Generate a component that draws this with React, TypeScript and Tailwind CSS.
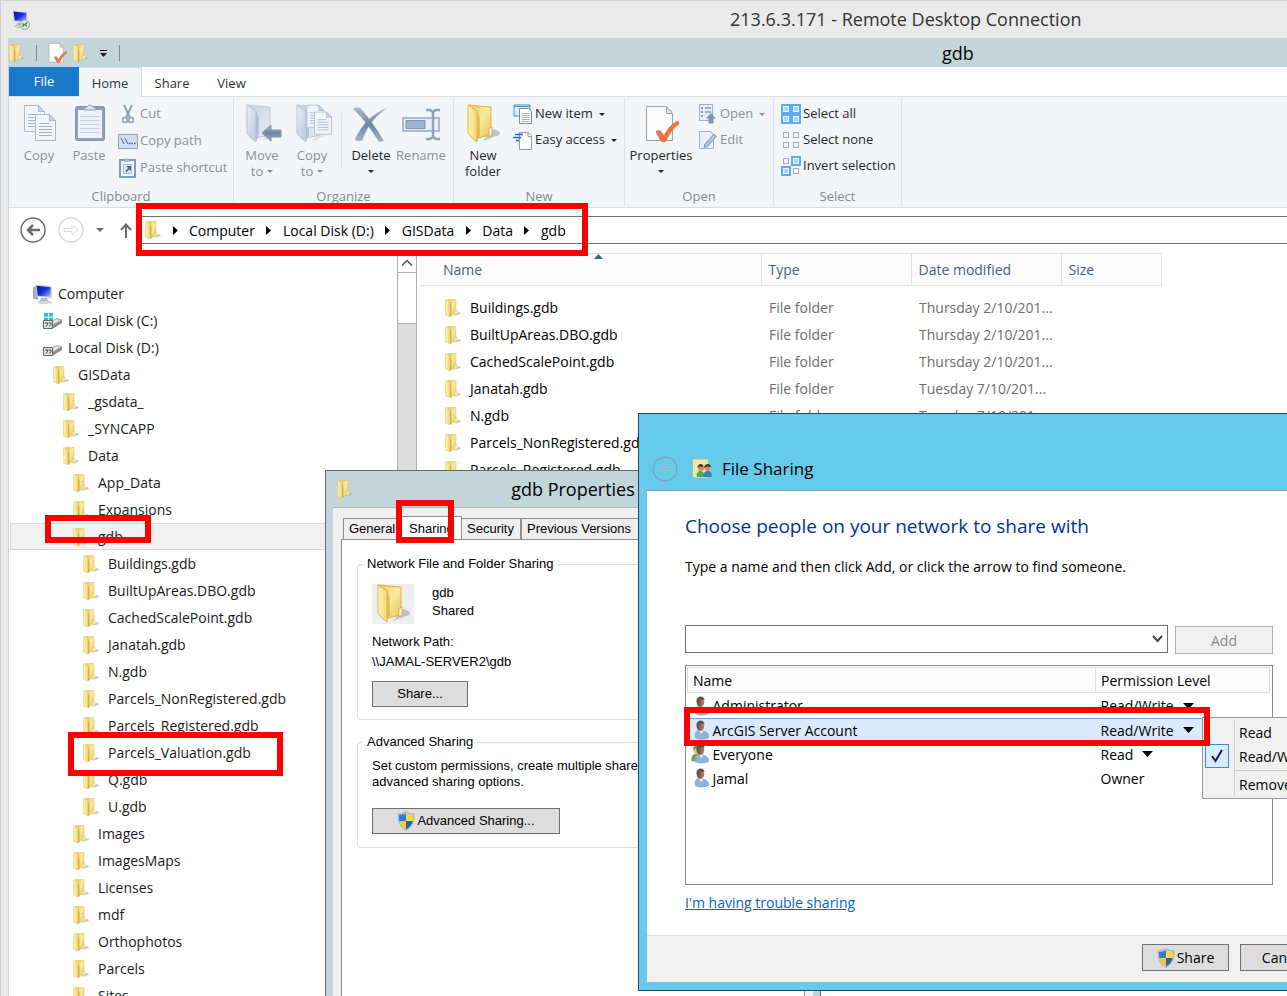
import { useState } from 'react';
import type { ReactNode } from 'react';

type TreeNode = { label: string; depth: number; kind?: 'computer' | 'system' | 'disk' };

const treeNodes: TreeNode[] = [
 { label: 'Computer', depth: 0, kind: 'computer' },
 { label: 'Local Disk (C:)', depth: 1, kind: 'system' },
 { label: 'Local Disk (D:)', depth: 1, kind: 'disk' },
 { label: 'GISData', depth: 2 },
 { label: '_gsdata_', depth: 3 },
 { label: '_SYNCAPP', depth: 3 },
 { label: 'Data', depth: 3 },
 { label: 'App_Data', depth: 4 },
 { label: 'Expansions', depth: 4 },
 { label: 'gdb', depth: 4 },
 { label: 'Buildings.gdb', depth: 5 },
 { label: 'BuiltUpAreas.DBO.gdb', depth: 5 },
 { label: 'CachedScalePoint.gdb', depth: 5 },
 { label: 'Janatah.gdb', depth: 5 },
 { label: 'N.gdb', depth: 5 },
 { label: 'Parcels_NonRegistered.gdb', depth: 5 },
 { label: 'Parcels_Registered.gdb', depth: 5 },
 { label: 'Parcels_Valuation.gdb', depth: 5 },
 { label: 'Q.gdb', depth: 5 },
 { label: 'U.gdb', depth: 5 },
 { label: 'Images', depth: 4 },
 { label: 'ImagesMaps', depth: 4 },
 { label: 'Licenses', depth: 4 },
 { label: 'mdf', depth: 4 },
 { label: 'Orthophotos', depth: 4 },
 { label: 'Parcels', depth: 4 },
 { label: 'Sites', depth: 4 },
];

const indents = ['pl-[22px]', 'pl-[32px]', 'pl-[42px]', 'pl-[52px]', 'pl-[62px]', 'pl-[72px]'];

const files = [
 { name: 'Buildings.gdb', date: 'Thursday 2/10/201...' },
 { name: 'BuiltUpAreas.DBO.gdb', date: 'Thursday 2/10/201...' },
 { name: 'CachedScalePoint.gdb', date: 'Thursday 2/10/201...' },
 { name: 'Janatah.gdb', date: 'Tuesday 7/10/201...' },
 { name: 'N.gdb', date: 'Tuesday 7/10/201...' },
 { name: 'Parcels_NonRegistered.gdb', date: 'Tuesday 7/10/201...' },
 { name: 'Parcels_Registered.gdb', date: 'Tuesday 7/10/201...' },
];

const people = [
 { name: 'Administrator', level: 'Read/Write', menu: true },
 { name: 'ArcGIS Server Account', level: 'Read/Write', menu: true },
 { name: 'Everyone', level: 'Read', menu: true, group: true },
 { name: 'Jamal', level: 'Owner' },
];

const crumbs = ['Computer', 'Local Disk (D:)', 'GISData', 'Data', 'gdb'];

/* ---------- icons ---------- */

// Gradients shared by all the icons on the page
function IconDefs() {
 return (
  <svg className="absolute h-0 w-0" aria-hidden="true">
   <defs>
    <linearGradient id="folderFront" x1="0" y1="0" x2="1" y2="0">
     <stop offset="0" stopColor="#fdf3b8" />
     <stop offset="1" stopColor="#f3d873" />
    </linearGradient>
    <linearGradient id="folderBack" x1="0" y1="0" x2="1" y2="1">
     <stop offset="0" stopColor="#e6c55e" />
     <stop offset="0.5" stopColor="#f9eaa0" />
     <stop offset="1" stopColor="#e8c453" />
    </linearGradient>
    <linearGradient id="blueFront" x1="0" y1="0" x2="1" y2="1">
     <stop offset="0" stopColor="#e9eff7" />
     <stop offset="1" stopColor="#b9c7da" />
    </linearGradient>
    <linearGradient id="blueBack" x1="0" y1="0" x2="1" y2="1">
     <stop offset="0" stopColor="#c6d2e2" />
     <stop offset="1" stopColor="#e4ebf4" />
    </linearGradient>
    <linearGradient id="steel" x1="0" y1="0" x2="0" y2="1">
     <stop offset="0" stopColor="#aebdce" />
     <stop offset="0.5" stopColor="#71859f" />
     <stop offset="1" stopColor="#a3b2c6" />
    </linearGradient>
    <linearGradient id="screen" x1="0" y1="0" x2="1" y2="1">
     <stop offset="0" stopColor="#0b12a8" />
     <stop offset="0.5" stopColor="#1c2fd8" />
     <stop offset="1" stopColor="#9fc0ff" />
    </linearGradient>
    <linearGradient id="face" x1="0" y1="0" x2="1" y2="0">
     <stop offset="0" stopColor="#5c4638" />
     <stop offset="1" stopColor="#b98563" />
    </linearGradient>
   </defs>
  </svg>
 );
}

function SmallFolder() {
 return (
  <svg className="h-5 w-4 shrink-0" viewBox="0 0 16 20" aria-hidden="true">
   <path d="M9 18l6.500-2c.8-1-.8-2.500-2-2z" fill="#b5b5b5" opacity=".75" />
   <path d="M2.500 1.500H11v14L5 18z" fill="url(#folderBack)" stroke="#e0bf5c" strokeWidth=".5" />
   <path d="M.5 1.500L5 3.500V19l-4.500-2z" fill="url(#folderFront)" stroke="#e3c566" strokeWidth=".5" />
   <path d="M5 3.500V19l1.500-.8V8z" fill="#b9933a" opacity=".6" />
   <path d="M9.500 12.500h2.500v3.500l-2.500.6z" fill="#f8eab0" stroke="#d9bd68" strokeWidth=".4" />
  </svg>
 );
}

function BigFolder({ blue = false, children }: { blue?: boolean; children?: ReactNode }) {
 return (
  <svg className="h-10 w-10" viewBox="0 0 40 40" aria-hidden="true">
   <path d="M20 37l16-6c3-2-1-5-6-6z" fill="#9d9d9d" opacity={blue ? 0.2 : 0.55} />
   <path d="M5 1l23 2v28l-14 3z" fill={blue ? 'url(#blueBack)' : 'url(#folderBack)'} stroke={blue ? '#bccadb' : '#dcb23c'} />
   <path d="M5 1l9 6v31l-5-4-4-5z" fill={blue ? 'url(#blueFront)' : 'url(#folderFront)'} stroke={blue ? '#b3c2d6' : '#ddb64a'} />
   <path d="M14 8v29l3-6V14z" fill={blue ? '#9fb0c6' : '#d9aa30'} opacity=".6" />
   {!blue && <path d="M26 24l3-1v8l-3 2z" fill="#fbf4cf" stroke="#c9a13c" strokeWidth=".7" />}
   {children}
  </svg>
 );
}

// Sheet with a folded corner and text lines, drawn inside a parent svg
function Sheet({ x, y }: { x: number; y: number }) {
 return (
  <g transform={`translate(${x} ${y})`}>
   <path d="M.5.5h14l6 6v20H.5z" fill="#f2f6fb" stroke="#a9bad0" />
   <path d="M14.500.5v6h6z" fill="#c8d5e5" stroke="#a9bad0" />
   <path d="M4 9.500h10M4 12.500h13M4 15.500h13M4 18.500h13M4 21.500h13" stroke="#9fb2cc" />
  </g>
 );
}

function CopyIcon() {
 return (
  <svg className="h-10 w-10" viewBox="0 0 40 40" aria-hidden="true">
   <Sheet x={5} y={1} />
   <Sheet x={16} y={10} />
  </svg>
 );
}

function PasteIcon() {
 return (
  <svg className="h-10 w-10" viewBox="0 0 40 40" aria-hidden="true">
   <rect x="6.500" y="2.500" width="29" height="34" rx="2" fill="#8ea1bf" stroke="#7f93b3" />
   <path d="M9 6h24v28H9z" fill="#eef3fa" />
   <path d="M11 12.500h20M11 16.500h20M11 20.500h20M11 24.500h20M11 28.500h20" stroke="#c3d0e2" />
   <path d="M15 6c0-3 3-2.500 4-4 1-1.500 3-1.500 4 0s4 1 4 4z" fill="#dbe4f0" stroke="#8a9dbb" />
  </svg>
 );
}

function PropertiesIcon({ className }: { className: string }) {
 return (
  <svg className={className} viewBox="0 0 40 40" aria-hidden="true">
   <path d="M5.500 2.500h20l6 7v27h-26z" fill="#fdfdfd" stroke="#a3a3a3" />
   <path d="M25.500 2.500v7h6z" fill="#e5e5e5" stroke="#a3a3a3" />
   <path d="M15 28c2-2 4-2 5 0l3 4c3-7 8-12 14-15l1 3c-6 4-10 10-13 17-1 1-4 1-5 0z" fill="#ef7440" stroke="#d4592a" strokeWidth=".6" />
  </svg>
 );
}

function MonitorIcon({ remote = false }: { remote?: boolean }) {
 return (
  <svg className="h-5 w-5 shrink-0" viewBox={remote ? '2 1 18 19' : '1 1 17 17'} aria-hidden="true">
   {!remote && <path d="M1 4l4-1v11l-4-1z" fill="#9daec4" stroke="#7d8da3" strokeWidth=".5" />}
   <path d="M3 1.500l14 1.500v10L4 12z" fill="#c9d3e4" />
   <path d="M4 2.500l12 1.300v8L5 11z" fill="url(#screen)" />
   <path d="M8 13h5l1 3H6z" fill="#b7bcc6" />
   <path d="M5 16l8-1 4 2-10 1z" fill="#d8dbe1" stroke="#a4a9b3" strokeWidth=".4" />
   {remote && (
    <>
     <circle cx="14.500" cy="15" r="4.500" fill="#e3e6e3" stroke="#8f958f" strokeWidth=".8" />
     <path d="M12 14l2 1-1.500 2M17 13l-2 1.500 1.500 2" fill="none" stroke="#2e9a3c" strokeWidth="1.300" />
    </>
   )}
  </svg>
 );
}

function DiskIcon({ system = false }: { system?: boolean }) {
 return (
  <svg className="h-5 w-5 shrink-0" viewBox="1 0 20 20" aria-hidden="true">
   {system && <path d="M2 2h4v3.500H2zM7 2h4v3.500H7zM2 6.500h4V9H2zM7 6.500h4V9H7z" fill="#1fbfe8" />}
   <path d="M7 11l8-3.500 5 1.500-9 5z" fill="#e0e0e0" stroke="#8a8a8a" strokeWidth=".7" />
   <path d="M11 14l9-5v3l-9 5.500z" fill="#8c8c8c" />
   <path d="M1.500 9.500h9v8h-9z" fill="#d6e4e4" stroke="#5d6b6b" />
   <path d="M3 12h2.500v1.500L4 15.500M6.500 12H9v1.500l-1.500 2" fill="none" stroke="#444" />
  </svg>
 );
}

function Person({ group = false }: { group?: boolean }) {
 return (
  <svg className="h-5 w-5 shrink-0" viewBox="0 0 20 20" aria-hidden="true">
   {group && (
    <>
     <path d="M1 17c-1-4 1-7 4-7s5 2 5 7z" fill="#76a84f" stroke="#54863a" strokeWidth=".5" />
     <circle cx="5.500" cy="6" r="3.500" fill="#dfc07c" />
     <path d="M2 6c0-6 7-6 7 0-2-2-5-2-7 0z" fill="#9b7a35" />
    </>
   )}
   <path d="M4.500 18C3.500 13 5 10.500 8 10.500c5 0 10.500 2 9.500 7-3.500 2-9.500 2-13 .5z" fill="#8db4df" stroke="#6e95c2" strokeWidth=".5" />
   <path d="M8 10.500l2.500 3.500 1.500-3.500z" fill="#fff" />
   <ellipse cx="9.500" cy="6" rx="3.800" ry="5" fill="url(#face)" />
   <path d="M5.500 6c-.5-7 8-7 8-2-2-1.500-5-1.200-8 2z" fill="#565250" />
  </svg>
 );
}

function Shield() {
 return (
  <svg className="h-5 w-[18px] shrink-0" viewBox="0 0 18 20" aria-hidden="true">
   <path d="M9 .5c2 1.600 5 2.500 8 2.500 0 8-2 13-8 16.500C3 16 1 11 1 3c3 0 6-.9 8-2.500z" fill="#c3c9d0" stroke="#8f9aa6" strokeWidth=".6" />
   <path d="M9 2.200V10H2.300C2 8 2 6 2 4c2.600-.1 5-.8 7-1.800z" fill="#2c7fc8" />
   <path d="M9 2.200V10h6.700c.3-2 .3-4 .3-6-2.600-.1-5-.8-7-1.800z" fill="#fbd64c" />
   <path d="M9 10H2.300C3 13.500 5 16.500 9 18.500z" fill="#f5c935" />
   <path d="M9 10h6.700c-.7 3.500-2.700 6.500-6.700 8.500z" fill="#2469ae" />
  </svg>
 );
}

function CaretDown({ className = 'h-1 w-[7px]' }: { className?: string }) {
 return (
  <svg className={className} viewBox="0 0 8 4" preserveAspectRatio="none" fill="currentColor" aria-hidden="true">
   <path d="M0 0h8L4 4z" />
  </svg>
 );
}

function CaretRight() {
 return (
  <span className="flex w-7 shrink-0 justify-center">
   <svg className="h-[9px] w-[5px]" viewBox="0 0 5 9" aria-hidden="true">
    <path d="M0 0l5 4.500L0 9z" />
   </svg>
  </span>
 );
}

function SmallIcon({ children }: { children: ReactNode }) {
 return (
  <svg className="h-5 w-5 shrink-0" viewBox="0 0 20 20" fill="none" aria-hidden="true">
   {children}
  </svg>
 );
}

function SelectBoxes({ on }: { on: boolean[] }) {
 const spots = [[0, 0], [10, 0], [0, 10], [10, 10]];
 return (
  <SmallIcon>
   {spots.map(([x, y], i) => (
    <g key={i}>
     {on[i] && <rect x={x} y={y} width="10" height="10" fill="#5fabee" />}
     <rect x={x + 2.5} y={y + 2.5} width="5" height="5" fill={on[i] ? '#a5d8fa' : '#f6f6f6'} stroke={on[i] ? '#e4f4ff' : '#a9a9a9'} />
    </g>
   ))}
  </SmallIcon>
 );
}

/* ---------- ribbon ---------- */

function BigButton({ icon, label, second, caret, disabled, wide }: { icon: ReactNode; label: string; second?: string; caret?: boolean; disabled?: boolean; wide?: boolean }) {
 return (
  <button disabled={disabled} className={`flex shrink-0 flex-col items-center pt-[3px] leading-4 ${wide ? 'w-[66px]' : 'w-[50px]'} ${disabled ? 'text-[#8c8f93]' : 'text-[#262626]'}`}>
   <span className="mb-[3px] h-10">{icon}</span>
   <span>{label}</span>
   <span className="flex h-4 items-center gap-1">
    {second}
    {caret && <CaretDown className="h-[3px] w-[6px]" />}
   </span>
  </button>
 );
}

function SmallButton({ icon, label, caret, disabled }: { icon: ReactNode; label: string; caret?: boolean; disabled?: boolean }) {
 return (
  <button disabled={disabled} className={`flex h-[26px] items-center gap-[2px] whitespace-nowrap ${disabled ? 'text-[#8c8f93]' : 'text-[#262626]'}`}>
   {icon}
   {label}
   {caret && <CaretDown className="ml-1 h-[3px] w-[6px]" />}
  </button>
 );
}

function RibbonGroup({ label, className, children }: { label: string; className: string; children: ReactNode }) {
 return (
  <section className={`my-px shrink-0 border-r border-[#dde2e6] pt-[3px] ${className}`}>
   <div className="flex h-[87px]">{children}</div>
   <h2 className="text-center leading-4 text-[#85898e]">{label}</h2>
  </section>
 );
}

function Ribbon() {
 return (
  <div className="flex h-28 overflow-hidden border-y border-[#d8dce0] bg-[#f3f6f8] text-[13px]">
   <RibbonGroup label="Clipboard" className="w-[225px] px-[5px]">
    <BigButton icon={<CopyIcon />} label="Copy" disabled />
    <BigButton icon={<PasteIcon />} label="Paste" disabled />
    <div className="flex flex-col gap-px pl-1">
     <SmallButton
      disabled
      label="Cut"
      icon={
       <SmallIcon>
        <path d="M6 1l6 13M14 1L8 14" stroke="#8ea1bd" strokeWidth="2" />
        <circle cx="7" cy="16" r="2.500" stroke="#8ea1bd" strokeWidth="1.500" />
        <circle cx="13" cy="16" r="2.500" stroke="#8ea1bd" strokeWidth="1.500" />
       </SmallIcon>
      }
     />
     <SmallButton
      disabled
      label="Copy path"
      icon={
       <SmallIcon>
        <rect x=".5" y="3.500" width="19" height="14" fill="#d3dfef" stroke="#8ea1bd" />
        <path d="M3 7l3 6M7 7l3 6" stroke="#4e6384" />
        <path d="M11 12.500h1.500m1 0H15m1 0h1.500" stroke="#4e6384" strokeWidth="1.500" />
       </SmallIcon>
      }
     />
     <SmallButton
      disabled
      label="Paste shortcut"
      icon={
       <SmallIcon>
        <rect x="2" y="2" width="15" height="17" fill="#f4f8fc" stroke="#849abd" strokeWidth="2" />
        <path d="M6 3c0-2 2-1 3.500-2C11 2 13 1 13 3z" fill="#dbe4f0" stroke="#849abd" />
        <rect x="5.500" y="6.500" width="8" height="9" fill="#e1eaf5" stroke="#a9bad0" />
        <path d="M8 8h5v5l-1.500-1.500L8 14.500 7.500 13l2.500-3z" fill="#4e6d9c" />
       </SmallIcon>
      }
     />
    </div>
   </RibbonGroup>

   <RibbonGroup label="Organize" className="w-[220px] px-[3px]">
    <BigButton
     disabled
     label="Move"
     second="to"
     caret
     icon={<BigFolder blue><path d="M20 29l9-8v5h10v7H29v4z" fill="url(#steel)" stroke="#8396ad" /></BigFolder>}
    />
    <BigButton
     disabled
     label="Copy"
     second="to"
     caret
     icon={<BigFolder blue><g transform="scale(.85)"><Sheet x={17} y={1} /><Sheet x={26} y={9} /></g></BigFolder>}
    />
    <span className="mx-1 mt-3 h-14 w-px bg-[#dde2e6]" />
    <BigButton
     label="Delete"
     caret
     icon={
      <svg className="h-10 w-10" viewBox="0 0 40 40" aria-hidden="true">
       <path d="M2 5c3-3 7-2 9 1 6 7 14 17 22 31l-5 1C21 27 13 15 2 5z" fill="url(#steel)" />
       <path d="M38 3C26 10 16 22 12 35c-1 3-7 3-8 0C10 22 21 9 38 3z" fill="url(#steel)" />
      </svg>
     }
    />
    <BigButton
     disabled
     label="Rename"
     icon={
      <svg className="h-10 w-10" viewBox="0 0 40 40" fill="none" aria-hidden="true">
       <path d="M2 14h36v13H2z" fill="#e8eff8" stroke="#93a7c3" strokeWidth="1.500" />
       <path d="M5 16.500h19v8H5z" fill="#9fb2cc" stroke="#7e93b2" />
       <path d="M25 6h4l3 2 3-2h4M25 35h4l3-2 3 2h4M32 7v27" stroke="#8fa2be" strokeWidth="2.500" />
      </svg>
     }
    />
   </RibbonGroup>

   <RibbonGroup label="New" className="w-[171px] px-1">
    <BigButton icon={<BigFolder />} label="New" second="folder" />
    <div className="flex flex-col pl-[5px]">
     <SmallButton
      label="New item"
      caret
      icon={
       <SmallIcon>
        <path d="M1 1h16v11H1z" fill="#d9eefa" stroke="#3d97cc" />
        <path d="M1 2.500h16" stroke="#3d97cc" />
        <path d="M6.500 4.500h9l3 3v12h-12z" fill="#fff" stroke="#888" />
        <path d="M8.500 9.500h8m-8 2h8m-8 2h8m-8 2h8m-8 2h8" stroke="#a3b4c4" />
       </SmallIcon>
      }
     />
     <SmallButton
      label="Easy access"
      caret
      icon={
       <SmallIcon>
        <path d="M6.500 2.500h9l3 3v14h-12z" fill="#fdfdfd" stroke="#999" />
        <path d="M15 2.500v4h4" stroke="#999" />
        <path d="M2 4.500h8M0 7.500h8M3 10.500h3" stroke="#2563c9" strokeWidth="1.500" />
       </SmallIcon>
      }
     />
    </div>
   </RibbonGroup>

   <RibbonGroup label="Open" className="w-[149px] px-[3px]">
    <BigButton wide icon={<PropertiesIcon className="h-10 w-10" />} label="Properties" caret />
    <div className="flex flex-col pl-1">
     <SmallButton
      disabled
      label="Open"
      caret
      icon={
       <SmallIcon>
        <path d="M1.500.5h13v16h-13z" fill="#e8eff8" stroke="#9bb0cc" />
        <path d="M3 3h2v2H3zm0 4h2v2H3zm0 4h2v2H3z" fill="#8399ba" />
        <path d="M7 4h6M7 8h6" stroke="#9bb0cc" strokeWidth="2" />
        <path d="M13 9l5 5.500h-2.500v5h-5v-5H8z" fill="#7f96b6" />
       </SmallIcon>
      }
     />
     <SmallButton
      disabled
      label="Edit"
      icon={
       <SmallIcon>
        <path d="M1.500 1.500h11l3 3v14h-14z" fill="#e8eff8" stroke="#9bb0cc" />
        <path d="M16 4l2.500 2.500-9 10-3.500 1 1-3.500z" fill="#b5c5da" stroke="#7f96b6" />
       </SmallIcon>
      }
     />
    </div>
   </RibbonGroup>

   <RibbonGroup label="Select" className="w-[128px] px-[3px]">
    <div className="flex flex-col pl-1">
     <SmallButton icon={<SelectBoxes on={[true, true, true, true]} />} label="Select all" />
     <SmallButton icon={<SelectBoxes on={[false, false, false, false]} />} label="Select none" />
     <SmallButton icon={<SelectBoxes on={[false, true, true, false]} />} label="Invert selection" />
    </div>
   </RibbonGroup>
  </div>
 );
}

/* ---------- explorer ---------- */

function NavigationBar() {
 return (
  <div className="relative flex h-[45px] items-start pt-2">
   <div className="flex h-7 w-32 shrink-0 items-center pl-[11px] text-[#6b6b6b]">
    <button aria-label="Back">
     <svg className="h-[26px] w-[26px]" viewBox="0 0 26 26" fill="none" stroke="currentColor" aria-hidden="true">
      <circle cx="13" cy="13" r="12" strokeWidth="1.500" />
      <path d="M20 13H8M13 8l-5 5 5 5" strokeWidth="2.500" />
     </svg>
    </button>
    <button aria-label="Forward" className="ml-3 text-[#dadada]">
     <svg className="h-[26px] w-[26px]" viewBox="0 0 26 26" fill="none" stroke="currentColor" aria-hidden="true">
      <circle cx="13" cy="13" r="12" strokeWidth="1.500" />
      <path d="M6 11.500h8V8l6 5-6 5v-3.500H6z" />
     </svg>
    </button>
    <button aria-label="Recent locations" className="ml-3"><CaretDown className="h-1 w-2" /></button>
    <button aria-label="Up" className="ml-4">
     <svg className="h-[15px] w-3" viewBox="0 0 12 15" fill="none" stroke="currentColor" strokeWidth="2" aria-hidden="true">
      <path d="M6 15V2M1 7l5-5.500L11 7" />
     </svg>
    </button>
   </div>
   <nav className="flex h-7 grow items-center whitespace-nowrap border-y border-l border-[#707070] pl-[7px] text-black">
    <SmallFolder />
    {crumbs.map(crumb => (
     <span key={crumb} className="flex items-center">
      <CaretRight />
      <a href="#">{crumb}</a>
     </span>
    ))}
   </nav>
   <div className="pointer-events-none absolute -top-[5px] left-[127px] z-10 h-[53px] w-[452px] border-6 border-[#ff0000]" />
  </div>
 );
}

function FolderTree({ selected, onSelect }: { selected: string; onSelect: (label: string) => void }) {
 return (
  <div className="relative w-[388px] shrink-0 pt-[27px] pl-px">
   <ul>
    {treeNodes.map(node => (
     <li key={node.label}>
      <button
       onClick={() => onSelect(node.label)}
       className={`flex h-[27px] w-full items-center border ${indents[node.depth]} ${selected === node.label ? 'border-[#d9d9d9] bg-[#f1f1f1]' : 'border-transparent'}`}
      >
       <span className="flex w-[25px] shrink-0">
        {node.kind === 'computer' && <MonitorIcon />}
        {node.kind === 'system' && <DiskIcon system />}
        {node.kind === 'disk' && <DiskIcon />}
        {!node.kind && <SmallFolder />}
       </span>
       {node.label}
      </button>
     </li>
    ))}
   </ul>
   <div className="pointer-events-none absolute top-[262px] left-[36px] h-7 w-[106px] border-6 border-[#ff0000]" />
   <div className="pointer-events-none absolute top-[479px] left-[59px] h-11 w-[215px] border-6 border-[#ff0000]" />
  </div>
 );
}

function FileList() {
 const th = 'h-8 border border-[#e0e3e6] bg-[#fcfcfc] pl-[7px] text-left font-normal text-[#4c607a]';
 return (
  <div className="grow overflow-hidden pl-[3px]">
   <table className="w-[742px] table-fixed border-collapse">
    <thead>
     <tr>
      <th className={`relative w-[341px] border-l-0 ${th} pl-[23px]`}>
       Name
       <svg className="absolute top-0 left-[174px] h-[5px] w-[9px]" viewBox="0 0 9 5" aria-hidden="true">
        <path d="M4.500 0L9 5H0z" fill="#4c607a" />
       </svg>
      </th>
      <th className={`w-[150px] ${th}`}>Type</th>
      <th className={`w-[150px] ${th}`}>Date modified</th>
      <th className={th}>Size</th>
     </tr>
    </thead>
    <tbody className="before:block before:h-2">
     {files.map(file => (
      <tr key={file.name} className="h-[27px] text-[#6d6d6d]">
       <td className="py-0 pl-[25px] text-black">
        <span className="flex items-center gap-[9px]">
         <SmallFolder />
         {file.name}
        </span>
       </td>
       <td className="py-0 pl-2">File folder</td>
       <td className="whitespace-nowrap py-0 pl-2">{file.date}</td>
       <td />
      </tr>
     ))}
    </tbody>
   </table>
  </div>
 );
}

/* ---------- gdb Properties ---------- */

function PropertiesDialog() {
 const tab = 'h-[21px] border border-b-0 border-[#8b8e96] bg-[#efefef] px-[5px] text-left whitespace-nowrap';
 const group = 'relative rounded border border-[#d5dfe5] pr-3 pl-[14px]';
 const legend = '-ml-[9px] px-1 leading-4';
 return (
  <section className="absolute top-[469px] left-[324px] flex h-[560px] w-[496px] flex-col border border-[#5d6b72] bg-[#c2d5db] px-[7px] pb-[7px]">
   <header className="flex h-9 items-center px-1">
    <SmallFolder />
    <h2 className="grow pr-4 text-center text-[18px] text-black">gdb Properties</h2>
   </header>
   <div className="relative flex grow flex-col border-t border-[#a9b6bc] bg-[#f0f0f0] px-2 pt-2 pb-4 font-['Liberation_Sans',Arial,sans-serif] text-[13px] text-black">
    <div className="flex items-end pl-[2px]" role="tablist">
     <button role="tab" className={`w-[58px] ${tab}`}>General</button>
     <button role="tab" aria-selected="true" className="-mb-px h-6 w-[61px] border border-b-0 border-[#8b8e96] bg-white pl-[7px] text-left">Sharing</button>
     <button role="tab" className={`w-[59px] border-l-0 ${tab}`}>Security</button>
     <button role="tab" className={`w-[121px] ${tab}`}>Previous Versions</button>
    </div>
    <div className="flex grow flex-col border border-[#8b8e96] bg-white px-[15px] pt-4">
     <fieldset className={`h-[164px] ${group}`}>
      <legend className={legend}>Network File and Folder Sharing</legend>
      <div className="flex items-start gap-[18px] pt-3">
       <div className="flex h-10 w-[42px] shrink-0 justify-center bg-[#efefef]"><BigFolder /></div>
       <p className="leading-[18px]">gdb<br />Shared</p>
      </div>
      <p className="pt-2 leading-5">Network Path:<br />{'\\\\JAMAL-SERVER2\\gdb'}</p>
      <button className="mt-[9px] h-[26px] w-24 border border-[#707070] bg-[#dddddd]">Share...</button>
     </fieldset>
     <fieldset className={`mt-[14px] h-[114px] ${group}`}>
      <legend className={legend}>Advanced Sharing</legend>
      <p className="pt-2 leading-4">Set custom permissions, create multiple shares, and set other advanced sharing options.</p>
      <button className="mt-[18px] flex h-[26px] w-[188px] items-center justify-center gap-[2px] border border-[#707070] bg-[#dddddd]">
       <Shield />
       Advanced Sharing...
      </button>
     </fieldset>
    </div>
   </div>
   <div className="pointer-events-none absolute top-[29px] left-[70px] h-[43px] w-[58px] border-6 border-[#ff0000]" />
  </section>
 );
}

/* ---------- File Sharing ---------- */

function PermissionMenu() {
 return (
  <div className="absolute top-[51px] left-[516px] w-[140px] border border-[#979797] bg-[#f1f1f1] py-[2px] text-black">
   <ul className="ml-[31px] border-l border-[#d0d0d0]">
    <li><button className="block h-6 pl-1">Read</button></li>
    <li className="relative">
     <span className="absolute top-0 -left-[30px] flex h-6 w-6 items-center justify-center border border-[#3c8cc8] bg-[#d9ecfa]">
      <svg className="h-[14px] w-3" viewBox="0 0 12 14" fill="none" stroke="#10108c" strokeWidth="2" aria-hidden="true">
       <path d="M1 7l3.500 5L11 1" />
      </svg>
     </span>
     <button className="block h-6 pl-1">Read/Write</button>
    </li>
    <li className="mt-[2px] border-t border-[#c8c8c8] pt-px"><button className="block h-6 pl-1">Remove</button></li>
   </ul>
  </div>
 );
}

function FileSharingDialog() {
 const th = 'h-[25px] border border-[#dedede] bg-[#fcfcfc] pl-[5px] text-left font-normal';
 return (
  <section className="absolute top-[412px] left-[637px] flex h-[578px] w-[740px] flex-col border border-[#2b4654] bg-[#66cbea] px-2 pb-2 text-black">
   <header className="flex h-[76px] items-center pt-[34px] pl-[5px]">
    <button aria-label="Back" className="text-[#74a9ba]">
     <svg className="h-[26px] w-[26px]" viewBox="0 0 26 26" fill="none" stroke="currentColor" aria-hidden="true">
      <circle cx="13" cy="13" r="12" strokeWidth="1.500" />
      <path d="M20 11.500h-8V8l-6 5 6 5v-3.500h8z" stroke="#9dbdc8" />
     </svg>
    </button>
    <svg className="ml-[14px] h-5 w-[22px]" viewBox="0 0 22 20" aria-hidden="true">
     <path d="M1 .5h15v18H1z" fill="#f8e69c" />
     <path d="M5 18c-1-4 1-6 3.500-6s4 2 4 6z" fill="#56a561" />
     <path d="M12 18c-1-4 1-6 3.500-6s5 2 4 6z" fill="#397fb0" />
     <circle cx="9" cy="9" r="3" fill="#c98f66" />
     <circle cx="15.500" cy="9" r="3" fill="#c98f66" />
     <path d="M5.500 9c0-5 6-5 6-1-2-.8-4-.8-6 1zM12 9c0-5 7-5 7-1-3-.8-4-.8-7 1z" fill="#40352e" />
    </svg>
    <h2 className="ml-2 text-[17px]">File Sharing</h2>
   </header>
   <div className="flex grow flex-col border-t border-[#7898ad] bg-white">
    <div className="grow px-[38px] pt-5">
     <h3 className="text-[19px] leading-[30px] text-[#003399]">Choose people on your network to share with</h3>
     <p className="mt-4 leading-5">Type a name and then click Add, or click the arrow to find someone.</p>
     <div className="mt-12 flex w-[588px] gap-[7px]">
      <label className="relative grow">
       <span className="sr-only">Name</span>
       <select className="block h-7 w-full appearance-none border border-[#707070] bg-white px-2">
        <option></option>
        <option>Everyone</option>
       </select>
       <svg className="pointer-events-none absolute top-[10px] right-[5px] h-2 w-[11px]" viewBox="0 0 11 8" fill="none" stroke="#444" strokeWidth="2" aria-hidden="true">
        <path d="M1 1l4.500 5L10 1" />
       </svg>
      </label>
      <button disabled className="mt-px h-7 w-[98px] border border-[#b0b0b0] bg-[#f0f0f0] text-[#8a8a8a]">Add</button>
     </div>
     <div className="relative mt-[11px] h-[220px] w-[588px] border border-[#828790] p-[2px] pt-px pl-px">
      <table className="w-full table-fixed border-collapse">
       <thead>
        <tr>
         <th className={`w-[408px] ${th}`}>Name</th>
         <th className={th}>Permission Level</th>
        </tr>
       </thead>
       <tbody className="before:block before:h-px">
        {people.map(person => (
         <tr key={person.name} className={`h-6 ${person.name === 'ArcGIS Server Account' ? 'border-t border-[#7da2ce] bg-[#dbeafc]' : ''}`}>
          <td className="py-0 pl-[3px]">
           <span className="flex h-[23px] items-center gap-[2px]">
            <Person group={person.group} />
            {person.name}
           </span>
          </td>
          <td className="py-0 pl-[5px]">
           <span className="flex items-center gap-[9px]">
            {person.level}
            {person.menu && <CaretDown className="h-[6px] w-[11px]" />}
           </span>
          </td>
         </tr>
        ))}
       </tbody>
      </table>
      <PermissionMenu />
      <div className="pointer-events-none absolute top-[41px] -left-[2px] h-[39px] w-[526px] border-6 border-[#ff0000]" />
     </div>
     <a href="#" className="mt-2 inline-block leading-5 text-[#0066cc] underline">I'm having trouble sharing</a>
    </div>
    <footer className="flex h-[47px] justify-end gap-[11px] border-t border-[#dfdfdf] bg-[#f0f0f0] pt-2 pr-[42px]">
     <button className="flex h-[27px] w-[87px] items-center justify-center border border-[#707070] bg-[#dddddd]">
      <Shield />
      <span className="ml-[2px]">Share</span>
     </button>
     <button className="h-[27px] w-[87px] border border-[#707070] bg-[#dddddd]">Cancel</button>
    </footer>
   </div>
  </section>
 );
}

export default function App() {
 const [selected, setSelected] = useState('gdb');

 return (
  <div className="relative flex h-screen flex-col overflow-hidden border-t border-l border-[#cfcfcf] bg-[#eaeaea] font-['Open_Sans','Noto_Sans',sans-serif] text-[14px] text-[#1a1a1a]">
   <IconDefs />
   <header className="flex h-[37px] shrink-0 items-center pl-[10px]">
    <MonitorIcon remote />
    <h1 className="pl-[699px] text-[18px] whitespace-nowrap text-[#333]">213.6.3.171 - Remote Desktop Connection</h1>
   </header>

   <main className="ml-[7px] flex grow flex-col border-t border-l border-[#d0d4d6] bg-white">
    <div className="flex h-7 shrink-0 items-center bg-[#c2d5db]">
     <SmallFolder />
     <span className="ml-[11px] h-4 w-px bg-[#7d8b91]" />
     <PropertiesIcon className="ml-[9px] h-[22px] w-[22px]" />
     <span className="ml-[5px]"><SmallFolder /></span>
     <button aria-label="Customize Quick Access Toolbar" className="ml-[10px] flex w-2 flex-col items-center gap-[2px]">
      <span className="h-px w-[7px] bg-black" />
      <CaretDown className="h-1 w-[7px]" />
     </button>
     <span className="ml-3 h-4 w-px bg-[#7d8b91]" />
     <h2 className="pl-[822px] text-[18px] text-black">gdb</h2>
    </div>
    <div className="flex h-[29px] shrink-0 text-[13px] text-[#333]" role="tablist">
     <button role="tab" className="w-[70px] bg-[#1979ca] text-white">File</button>
     <button role="tab" aria-selected="true" className="relative z-10 -mb-px w-[63px] border-t border-r border-[#d8dce0] bg-[#f3f6f8] pt-[3px]">Home</button>
     <button role="tab" className="w-[60px] pt-1">Share</button>
     <button role="tab" className="w-[59px] pt-1">View</button>
    </div>
    <Ribbon />
    <NavigationBar />
    <div className="flex grow">
     <FolderTree selected={selected} onSelect={setSelected} />
     <div className="flex w-5 shrink-0 flex-col border-x border-[#adadad] bg-white">
      <button aria-label="Scroll up" className="flex h-5 shrink-0 items-center justify-center border-b border-[#adadad]">
       <svg className="h-[7px] w-3" viewBox="0 0 12 7" fill="none" stroke="#555" strokeWidth="1.500" aria-hidden="true">
        <path d="M1 6.500l5-5 5 5" />
       </svg>
      </button>
      <div className="h-[50px] shrink-0" />
      <div className="grow border-t border-[#adadad] bg-[#dcdcdc]" />
     </div>
     <FileList />
    </div>
   </main>

   <PropertiesDialog />
   <FileSharingDialog />
  </div>
 );
}
